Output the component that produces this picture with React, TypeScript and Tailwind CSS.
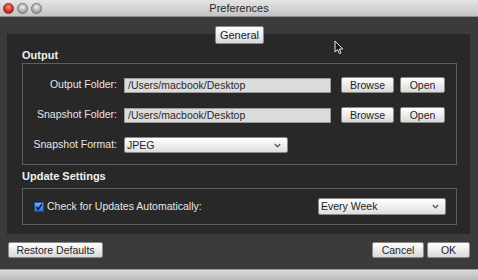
import type { ReactNode } from "react";

const font = { fontFamily: '"Liberation Sans", Arial, sans-serif' };

function Btn({ children, className = "" }: { children: ReactNode; className?: string }) {
  return (
    <button
      className={`h-[16px] flex items-center justify-center rounded-[2px] bg-gradient-to-b from-[#ffffff] to-[#d9d9d9] border border-[#8a8a8a] text-[10.5px] text-[#1e1e1e] leading-none ${className}`}
    >
      {children}
    </button>
  );
}

function Field({ value }: { value: string }) {
  return (
    <div className="w-[207px] h-[15px] bg-[#dcdcdc] border border-[#9a9a9a] flex items-center px-[3px] text-[10.5px] text-[#2a2a2a] leading-none">
      {value}
    </div>
  );
}

function Select({ value, className = "" }: { value: string; className?: string }) {
  return (
    <div
      className={`h-[16px] bg-gradient-to-b from-[#ffffff] to-[#dedede] rounded-[2px] border border-[#8a8a8a] flex items-center justify-between pl-[2px] pr-[6px] text-[10.5px] text-[#1e1e1e] leading-none ${className}`}
    >
      <span>{value}</span>
      <svg width="7" height="5" viewBox="0 0 7 5">
        <path d="M0.8 1 L3.5 3.8 L6.2 1" fill="none" stroke="#555" strokeWidth="1.3" />
      </svg>
    </div>
  );
}

function Row({ label, children }: { label: string; children: ReactNode }) {
  return (
    <div className="flex items-center">
      <div className="w-[95px] text-right text-[10.5px] text-[#e6e6e6] pr-[1px]">{label}</div>
      <div className="ml-[6px] flex items-center">{children}</div>
    </div>
  );
}

export default function App() {
  return (
    <div className="w-[478px] h-[280px] overflow-hidden flex flex-col bg-[#3b3b3b] relative" style={font}>
      {/* Title bar */}
      <div className="h-[17px] relative flex items-center bg-gradient-to-b from-[#e4e4e4] to-[#c4c4c4] border-b border-[#8e8e8e]">
        <div className="flex items-center gap-[3px] pl-[3px]">
          <span className="w-[11px] h-[11px] rounded-full bg-[radial-gradient(circle_at_50%_35%,#ff8a80,#d4281e_60%,#9c1a12)] border border-[#8a2a22]" />
          <span className="w-[11px] h-[11px] rounded-full bg-[radial-gradient(circle_at_50%_35%,#f2f2f2,#a8a8a8_60%,#7a7a7a)] border border-[#777]" />
          <span className="w-[11px] h-[11px] rounded-full bg-[radial-gradient(circle_at_50%_35%,#f2f2f2,#a8a8a8_60%,#7a7a7a)] border border-[#777]" />
        </div>
        <div className="absolute inset-0 flex items-center justify-center text-[11px] text-[#2a2a2a]">
          Preferences
        </div>
      </div>

      {/* Tab */}
      <div className="flex justify-center pt-[9px] pl-[1px] relative z-10 -mb-[10px]">
        <Btn className="w-[49px] !h-[18px] !text-[11px]">General</Btn>
      </div>

      {/* Panel */}
      <div className="ml-[7px] w-[463px] h-[200px] bg-[#282828] flex flex-col">
        <div className="pl-[15px] pt-[14px] text-[11px] font-bold text-[#f0f0f0] leading-[14px]">Output</div>
        <div className="ml-[15px] mt-[1px] w-[435px] h-[102px] border border-[#5e5e5e] flex flex-col pt-[13px] gap-[14px]">
          <Row label="Output Folder:">
            <Field value="/Users/macbook/Desktop" />
            <Btn className="ml-[10px] w-[53px]">Browse</Btn>
            <Btn className="ml-[6px] w-[45px]">Open</Btn>
          </Row>
          <Row label="Snapshot Folder:">
            <Field value="/Users/macbook/Desktop" />
            <Btn className="ml-[10px] w-[53px]">Browse</Btn>
            <Btn className="ml-[6px] w-[45px]">Open</Btn>
          </Row>
          <Row label="Snapshot Format:">
            <Select value="JPEG" className="w-[164px]" />
          </Row>
        </div>
        <div className="pl-[15px] pt-[4px] text-[11px] font-bold text-[#f0f0f0] leading-[14px]">Update Settings</div>
        <div className="ml-[15px] mt-[5px] w-[435px] h-[37px] border border-[#5e5e5e] flex items-center">
          <span className="ml-[11px] w-[10px] h-[10px] bg-gradient-to-b from-[#6fb4ff] to-[#1d6fd6] border border-[#1b4e8e] flex items-center justify-center">
            <svg width="8" height="8" viewBox="0 0 8 8">
              <path d="M1.2 4 L3.2 6.3 L7 1" fill="none" stroke="#0c1e3a" strokeWidth="1.6" />
            </svg>
          </span>
          <span className="ml-[3px] text-[10.5px] text-[#e6e6e6]">Check for Updates Automatically:</span>
          <Select value="Every Week" className="ml-auto mr-[10px] w-[128px] !h-[17px]" />
        </div>
      </div>

      {/* Bottom buttons */}
      <div className="flex items-center pt-[8px] px-[8px]">
        <Btn className="w-[95px]">Restore Defaults</Btn>
        <Btn className="ml-auto w-[52px]">Cancel</Btn>
        <Btn className="ml-[3px] w-[43px]">OK</Btn>
      </div>

      <div className="mt-auto h-[11px] bg-gradient-to-b from-[#d8d8d8] to-[#bdbdbd] border-t border-[#9a9a9a]" />

      {/* Mouse cursor */}
      <svg className="absolute left-[334px] top-[40px]" width="10" height="15" viewBox="0 0 10 15">
        <path d="M1 1 L1 12 L3.6 9.6 L5.4 13.6 L7 12.9 L5.3 9 L8.8 9 Z" fill="#1a1a1a" stroke="#e8e8e8" strokeWidth="1" />
      </svg>
    </div>
  );
}
